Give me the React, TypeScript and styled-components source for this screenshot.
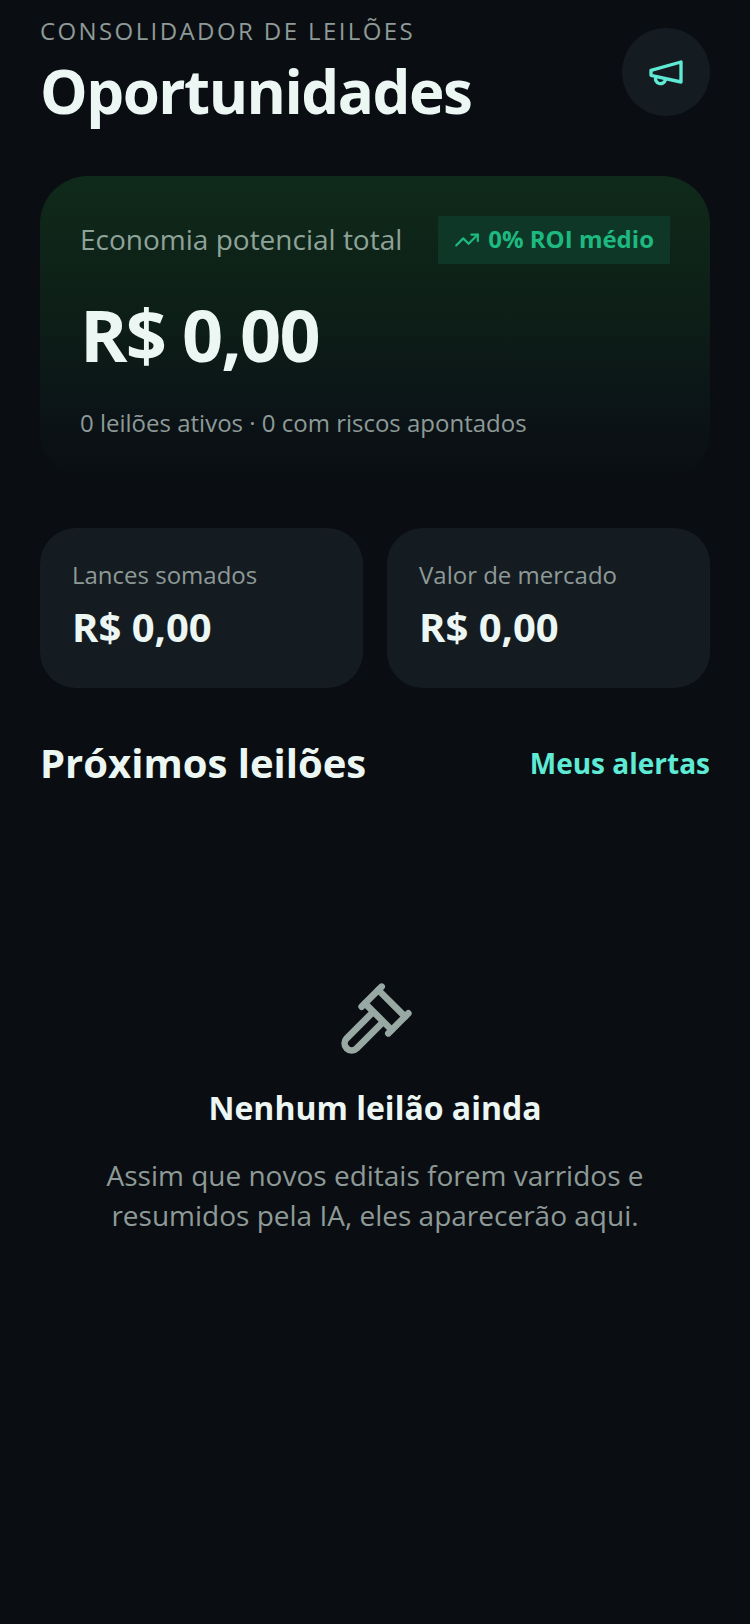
import React from "react";
import styled, { createGlobalStyle } from "styled-components";

const color = {
  bg: "#0a0e12",
  card: "#151c21",
  text: "#ecf7f4",
  muted: "#8e9a97",
  accent: "#5eead4",
  positive: "#1db980",
};

const GlobalStyle = createGlobalStyle`
  *, *::before, *::after { box-sizing: border-box; }
  html { background: ${color.bg}; }
  body {
    margin: 0;
    background: ${color.bg};
    color: ${color.text};
    font-family: "Open Sans", "Noto Sans", sans-serif;
  }
  h1, h2, h3, p, dl, dt, dd { margin: 0; }
`;

const Page = styled.main`
  display: flex;
  flex-direction: column;
  min-height: 100vh;
  padding: 14px 40px 48px;
`;

const Header = styled.header`
  display: flex;
  align-items: center;
  justify-content: space-between;
  margin-bottom: 46px;
`;

const Eyebrow = styled.p`
  margin-bottom: 4px;
  font-size: 24px;
  line-height: 34px;
  letter-spacing: 0.1em;
  text-transform: uppercase;
  color: ${color.muted};
`;

const Title = styled.h1`
  font-size: 60px;
  line-height: 78px;
  font-weight: 700;
  letter-spacing: -0.025em;
`;

const RoundButton = styled.button`
  display: flex;
  align-items: center;
  justify-content: center;
  width: 88px;
  height: 88px;
  padding: 0;
  border: 0;
  border-radius: 50%;
  background: ${color.card};
  color: ${color.accent};
  cursor: pointer;
`;

const Hero = styled.section`
  padding: 40px;
  margin-bottom: 48px;
  border-radius: 48px;
  background: linear-gradient(180deg, #0f2a1a 0%, #0d1d17 50%, #0b1317 80%, ${color.bg} 100%);
`;

const HeroTop = styled.div`
  display: flex;
  align-items: flex-start;
  justify-content: space-between;
  margin-bottom: 22px;
`;

const HeroLabel = styled.h2`
  font-size: 28px;
  line-height: 46px;
  font-weight: 400;
  color: #8ea398;
`;

const Badge = styled.span`
  display: flex;
  align-items: center;
  gap: 8px;
  padding: 0 16px 2px;
  background: #0e3727;
  color: ${color.positive};
  font-size: 24px;
  line-height: 46px;
  font-weight: 700;

  svg {
    margin-top: 2px;
  }
`;

const HeroValue = styled.p`
  font-size: 72px;
  line-height: 96px;
  font-weight: 700;
  letter-spacing: -0.025em;
  margin-bottom: 24px;
`;

const HeroNote = styled.p`
  font-size: 24px;
  line-height: 34px;
  color: ${color.muted};
`;

const Stats = styled.dl`
  display: grid;
  grid-template-columns: 1fr 1fr;
  gap: 24px;
  margin-bottom: 48px;
`;

const Stat = styled.div`
  display: flex;
  flex-direction: column;
  gap: 8px;
  padding: 30px 32px 34px;
  border-radius: 36px;
  background: ${color.card};
`;

const StatLabel = styled.dt`
  font-size: 24px;
  line-height: 34px;
  color: ${color.muted};
`;

const StatValue = styled.dd`
  font-size: 40px;
  line-height: 54px;
  font-weight: 700;
`;

const SectionHeader = styled.div`
  display: flex;
  align-items: center;
  justify-content: space-between;
`;

const SectionTitle = styled.h2`
  font-size: 40px;
  line-height: 54px;
  font-weight: 700;
`;

const SectionLink = styled.a`
  font-size: 28px;
  line-height: 40px;
  font-weight: 700;
  color: ${color.accent};
  text-decoration: none;
`;

const Empty = styled.section`
  display: flex;
  flex-direction: column;
  align-items: center;
  padding: 190px 60px 0;
  text-align: center;
`;

const EmptyTitle = styled.h3`
  margin: 25px 0 24px;
  font-size: 32px;
  line-height: 46px;
  font-weight: 700;
`;

const EmptyText = styled.p`
  max-width: 560px;
  font-size: 28px;
  line-height: 40px;
  color: ${color.muted};
`;

const GavelIcon = styled.svg`
  color: #98a8a3;
`;

const stroke = {
  viewBox: "0 0 24 24",
  fill: "none",
  stroke: "currentColor",
  strokeWidth: 2,
  strokeLinecap: "round" as const,
  strokeLinejoin: "round" as const,
  "aria-hidden": true,
};

const stats = [
  { label: "Lances somados", value: "R$ 0,00" },
  { label: "Valor de mercado", value: "R$ 0,00" },
];

export default function App() {
  return (
    <>
      <GlobalStyle />
      <Page>
        <Header>
          <div>
            <Eyebrow>Consolidador de leilões</Eyebrow>
            <Title>Oportunidades</Title>
          </div>
          <RoundButton type="button" aria-label="Alertas">
            <svg {...stroke} width="40" height="40">
              <path d="m3 11 18-5v12L3 14v-3z" />
              <path d="M11.6 16.8a3 3 0 1 1-5.8-1.6" />
            </svg>
          </RoundButton>
        </Header>

        <Hero>
          <HeroTop>
            <HeroLabel>Economia potencial total</HeroLabel>
            <Badge>
              <svg {...stroke} width="26" height="26">
                <path d="M22 7l-8.5 8.5-5-5L2 17" />
                <path d="M16 7h6v6" />
              </svg>
              0% ROI médio
            </Badge>
          </HeroTop>
          <HeroValue>R$ 0,00</HeroValue>
          <HeroNote>0 leilões ativos · 0 com riscos apontados</HeroNote>
        </Hero>

        <Stats>
          {stats.map((s) => (
            <Stat key={s.label}>
              <StatLabel>{s.label}</StatLabel>
              <StatValue>{s.value}</StatValue>
            </Stat>
          ))}
        </Stats>

        <SectionHeader>
          <SectionTitle>Próximos leilões</SectionTitle>
          <SectionLink href="#alertas">Meus alertas</SectionLink>
        </SectionHeader>

        <Empty>
          <GavelIcon {...stroke} width="80" height="80">
            <path d="m14 13-7.5 7.5a2.12 2.12 0 0 1-3-3L11 10" />
            <path d="m16 16 6-6" />
            <path d="m8 8 6-6" />
            <path d="m9 7 8 8" />
            <path d="m21 11-8-8" />
          </GavelIcon>
          <EmptyTitle>Nenhum leilão ainda</EmptyTitle>
          <EmptyText>
            Assim que novos editais forem varridos e resumidos pela IA, eles aparecerão aqui.
          </EmptyText>
        </Empty>
      </Page>
    </>
  );
}
